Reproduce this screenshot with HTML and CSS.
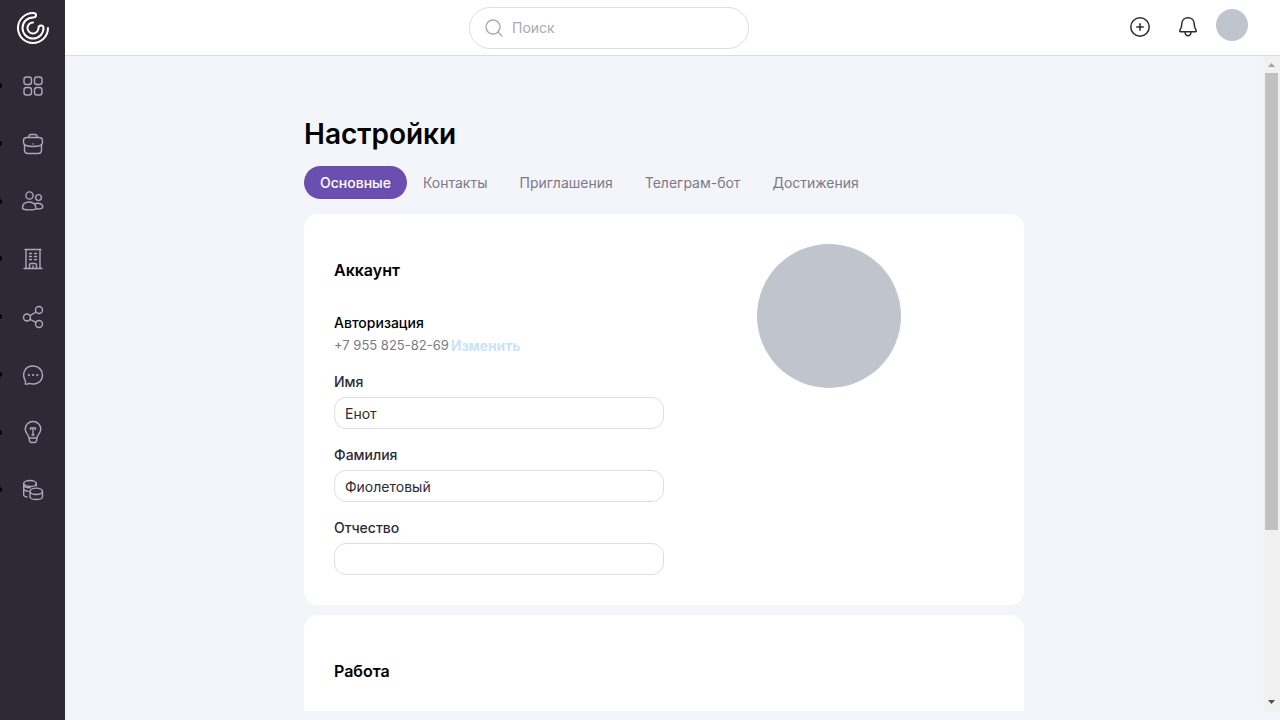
FILE: index.html
```html
<!DOCTYPE html>
<html lang="ru">
<head>
<meta charset="utf-8">
<meta name="viewport" content="width=device-width, initial-scale=1">
<title>Настройки</title>
<link rel="stylesheet" href="styles.css">
</head>
<body>
<div class="app">
  <nav class="sidebar" aria-label="Главное меню">
    <a class="logo" href="#" aria-label="Главная">
      <svg width="34" height="34" viewBox="0 0 34 34">
        <path d="M32 17A15 15 0 1 1 17 2C21 2 21 6.500 17 6.500A10.500 10.500 0 1 0 27.500 17C27.500 13.500 22.500 13.500 22.500 17A5.500 5.500 0 1 1 17 11.500"/>
      </svg>
    </a>
    <ul class="menu">
      <li class="menu-item"><a class="menu-link" href="#" aria-label="Рабочий стол">
        <svg class="icon" width="24" height="24" viewBox="0 0 24 24"><rect x="3" y="3" width="7.500" height="7.500" rx="2.500"/><rect x="13.500" y="3" width="7.500" height="7.500" rx="2.500"/><rect x="3" y="13.500" width="7.500" height="7.500" rx="2.500"/><rect x="13.500" y="13.500" width="7.500" height="7.500" rx="2.500"/></svg>
      </a></li>
      <li class="menu-item"><a class="menu-link" href="#" aria-label="Проекты">
        <svg class="icon" width="24" height="24" viewBox="0 0 24 24"><path d="M8 5.500V4.500Q8 2.500 10 2.500H14Q16 2.500 16 4.500V5.500M6 5.500H18Q21.500 5.500 21.500 9V10.500Q21.500 14.500 12 14.500Q2.500 14.500 2.500 10.500V9Q2.500 5.500 6 5.500ZM3.500 13V18Q3.500 21.500 7 21.500H17Q20.500 21.500 20.500 18V13M12 12H12.100"/></svg>
      </a></li>
      <li class="menu-item"><a class="menu-link" href="#" aria-label="Люди">
        <svg class="icon" width="24" height="24" viewBox="0 0 24 24"><circle cx="8.500" cy="6.500" r="3.600"/><circle cx="17.500" cy="8.500" r="2.900"/><path d="M1.500 19C1.500 15 4.500 13 8.300 13S15 15.500 15 19C15 21.500 1.500 21.500 1.500 19ZM13.500 15.500C16.500 13 21.800 14.500 21.800 18C21.800 19.600 18.500 20.200 15 19.800"/></svg>
      </a></li>
      <li class="menu-item"><a class="menu-link" href="#" aria-label="Компании">
        <svg class="icon" width="24" height="24" viewBox="0 0 24 24"><path d="M4 2.500H20M3 21.500H21M5 2.500V21.500M19 2.500V21.500M8.500 21V18Q8.500 16.500 10 16.500H14Q15.500 16.500 15.500 18V21M12 19V21M8.500 6.500H10.500M13.500 6.500H15.500M8.500 9.500H10.500M13.500 9.500H15.500M8.500 12.500H10.500M13.500 12.500H15.500"/></svg>
      </a></li>
      <li class="menu-item"><a class="menu-link" href="#" aria-label="Связи">
        <svg class="icon" width="24" height="24" viewBox="0 0 24 24"><circle cx="6" cy="12.500" r="3.500"/><circle cx="18" cy="5" r="3.500"/><circle cx="18" cy="19" r="3.500"/><path d="M9 10.700L15 7M9 14.300L15 17.300"/></svg>
      </a></li>
      <li class="menu-item"><a class="menu-link" href="#" aria-label="Сообщения">
        <svg class="icon" width="24" height="24" viewBox="0 0 24 24"><path d="M3.800 16.500C1 11 3.500 3 12 3C17.500 3 21.500 7 21.500 12C21.500 19 14.500 22.500 8.500 20.300C7 21 5.500 21.300 4.300 21.100C5 19.500 4.500 18 3.800 16.500Z"/><path class="dots" d="M7.800 12H8M12 12H12.200M16.200 12H16.400"/></svg>
      </a></li>
      <li class="menu-item"><a class="menu-link" href="#" aria-label="Идеи">
        <svg class="icon" width="24" height="24" viewBox="0 0 24 24"><path d="M8 18C8 14.500 4.200 13.500 4.200 9A7.800 7.500 0 0 1 19.800 9C19.800 13.500 16 14.500 16 18ZM8 18L8.500 21Q9 22.500 10.500 22.500H13.500Q15 22.500 15.500 21L16 18M9.500 9.500V8H14.500V9.500M12 8V15M11 15H13"/></svg>
      </a></li>
      <li class="menu-item"><a class="menu-link" href="#" aria-label="Финансы">
        <svg class="icon" width="24" height="24" viewBox="0 0 24 24"><ellipse cx="9" cy="5.500" rx="6.300" ry="3"/><path d="M2.700 5.500V17Q3 18.800 6 19M15.300 5.500V8M2.700 11Q3.500 13 7 13.200"/><ellipse cx="15.300" cy="13.300" rx="6.200" ry="3.200"/><path d="M9 13.300V19C9.500 22.300 21 22.300 21.500 19V13.300M2.700 7.500Q4 10 9 9.800"/></svg>
      </a></li>
    </ul>
  </nav>

  <div class="page">
    <header class="topbar">
      <label class="search">
        <svg class="search-icon" width="20" height="20" viewBox="0 0 20 20"><circle cx="9" cy="9" r="7"/><path d="M14 14L18 18"/></svg>
        <input class="search-input" type="search" placeholder="Поиск" aria-label="Поиск">
      </label>
      <div class="actions">
        <button class="action" type="button" aria-label="Добавить">
          <svg width="24" height="24" viewBox="0 0 24 24"><circle cx="12" cy="12" r="9.200"/><path d="M12 8.800V15.200M8.800 12H15.200"/></svg>
        </button>
        <button class="action" type="button" aria-label="Уведомления">
          <svg width="24" height="24" viewBox="0 0 24 24"><path d="M5.800 9C5.800 0.600 18.200 0.600 18.200 9C18.200 12.500 19 13.500 20 15C20.800 16.400 20.200 16.800 18.500 16.800H5.500C3.800 16.800 3.200 16.400 4 15C5 13.500 5.800 12.500 5.800 9ZM9 17C9.300 22 14.700 22 15 17"/></svg>
        </button>
        <button class="profile" type="button" aria-label="Профиль"></button>
      </div>
    </header>

    <div class="viewport">
      <main class="content">
        <div class="settings">
          <h1 class="title">Настройки</h1>
          <nav class="tabs" aria-label="Разделы настроек">
            <a class="tab tab-active" href="#" aria-current="page">Основные</a>
            <a class="tab" href="#">Контакты</a>
            <a class="tab" href="#">Приглашения</a>
            <a class="tab" href="#">Телеграм-бот</a>
            <a class="tab" href="#">Достижения</a>
          </nav>
          <section class="card">
            <form class="account">
              <h2 class="card-title">Аккаунт</h2>
              <div class="auth">
                <h3 class="auth-title">Авторизация</h3>
                <div class="auth-row"><span class="phone">+7 955 825-82-69</span><button class="change" type="button">Изменить</button></div>
              </div>
              <div class="field"><label class="label" for="first">Имя</label><input class="input" id="first" type="text" value="Енот"></div>
              <div class="field"><label class="label" for="last">Фамилия</label><input class="input" id="last" type="text" value="Фиолетовый"></div>
              <div class="field"><label class="label" for="middle">Отчество</label><input class="input" id="middle" type="text"></div>
            </form>
            <div class="photo" role="img" aria-label="Фото профиля"></div>
          </section>
          <section class="card">
            <div class="work"><h2 class="card-title">Работа</h2></div>
          </section>
        </div>
      </main>
      <div class="scrollbar" aria-hidden="true">
        <svg class="arrow-up" width="17" height="17" viewBox="0 0 17 17"><path d="M5 11L8.500 7L12 11Z"/></svg>
        <div class="thumb"></div>
        <svg class="arrow-down" width="17" height="17" viewBox="0 0 17 17"><path d="M5 6L8.500 10L12 6Z"/></svg>
      </div>
    </div>
  </div>
</div>
</body>
</html>
```
FILE: styles.css
```css
* { box-sizing: border-box; }

body {
  margin: 0;
  background: #f4f5fb;
  color: #000;
  font: 14px/20px Inter, "Noto Sans", sans-serif;
}

button, input { font: inherit; }
button { padding: 0; border: 0; background: none; cursor: pointer; }
a { text-decoration: none; }
svg { display: block; fill: none; stroke-linecap: round; stroke-linejoin: round; }

.app { display: flex; height: 100vh; }

/* Sidebar */
.sidebar { flex: none; width: 65px; background: #2e2a35; }
.logo { display: flex; justify-content: center; padding: 11px 0 12px; }
.logo svg { stroke: #fff; stroke-width: 2; }
.menu {
  display: grid;
  grid-template-rows: repeat(8, 1fr);
  height: 462px;
  margin: 0;
  padding: 0;
  list-style: none;
}
.menu-item { position: relative; display: grid; }
.menu-item::before {
  content: "";
  position: absolute;
  left: -3px;
  top: 26px;
  width: 5px;
  height: 5px;
  border-radius: 50%;
  background: #000;
}
.menu-link { display: grid; place-items: center; }
.icon { stroke: #aba7bc; stroke-width: 1.4; }
.dots { stroke-width: 2; }

/* Top bar */
.page { flex: 1; min-width: 0; display: flex; flex-direction: column; padding-bottom: 9px; }
.topbar {
  flex: none;
  display: flex;
  align-items: center;
  height: 56px;
  padding: 0 32px 0 25px;
  border-bottom: 1px solid #dadae5;
  background: #fff;
}
.search {
  display: flex;
  align-items: center;
  gap: 8px;
  width: 280px;
  height: 42px;
  margin: 0 auto;
  padding: 0 14px;
  border: 1px solid #dddde7;
  border-radius: 21px;
}
.search-icon { flex: none; stroke: #aba7bc; stroke-width: 1.4; }
.search-input {
  flex: 1;
  min-width: 0;
  padding: 0;
  border: 0;
  outline: 0;
  background: none;
  appearance: none;
}
.search-input::placeholder { color: #a9a9b2; opacity: 1; }
.actions { display: flex; align-items: center; padding-bottom: 2px; }
.action { margin-right: 24px; }
.action svg { stroke: #2e2a35; stroke-width: 1.5; }
.profile { width: 32px; height: 32px; margin: 0 0 4px -8px; border-radius: 50%; background: #c0c4cd; }

/* Scrolling area */
.viewport { flex: 1; min-height: 0; display: flex; }
.content { flex: 1; min-width: 0; overflow-y: auto; scrollbar-width: none; }
.scrollbar { flex: none; display: flex; flex-direction: column; width: 17px; background: #f1f1f1; }
.thumb { height: 457px; margin: 0 2px auto; background: #c1c1c1; }
.arrow-up { fill: #a3a3a3; }
.arrow-down { fill: #505050; }

/* Settings */
.settings { max-width: 720px; margin: 0 auto; padding-top: 60px; }
.title { margin: 0 0 14px; font-size: 28px; line-height: 36px; font-weight: 600; }
.tabs { display: flex; margin-bottom: 15px; }
.tab { padding: 0 16px; border-radius: 17px; color: #7c7987; line-height: 33px; }
.tab-active { background: #6b4fb0; color: #fff; font-weight: 500; }
.card {
  display: grid;
  grid-template-columns: 1fr 1fr;
  margin-bottom: 10px;
  padding: 30px;
  border-radius: 14px;
  background: #fff;
}
.card-title { margin: 14px 0 31px; font-size: 16px; line-height: 24px; font-weight: 600; }
.auth { margin-bottom: 16px; }
.auth-title { margin: 0 0 2px; font-size: 14px; line-height: 20px; font-weight: 500; }
.auth-row { display: flex; gap: 2px; line-height: 21px; }
.phone { color: #7c7987; font-size: 13px; }
.change { color: #c5e2ff; font-weight: 600; }
.field { display: grid; gap: 5px; margin-bottom: 16px; }
.field:last-child { margin-bottom: 0; }
.label { color: #2e2a35; font-weight: 500; }
.input {
  width: 100%;
  height: 32px;
  padding: 0 10px;
  border: 1px solid #dddde7;
  border-radius: 12px;
  background: #fff;
  color: #2e2a35;
}
.photo { width: 144px; height: 144px; justify-self: center; border-radius: 50%; background: #c0c4cd; }
.work { padding-bottom: 60px; }
```
